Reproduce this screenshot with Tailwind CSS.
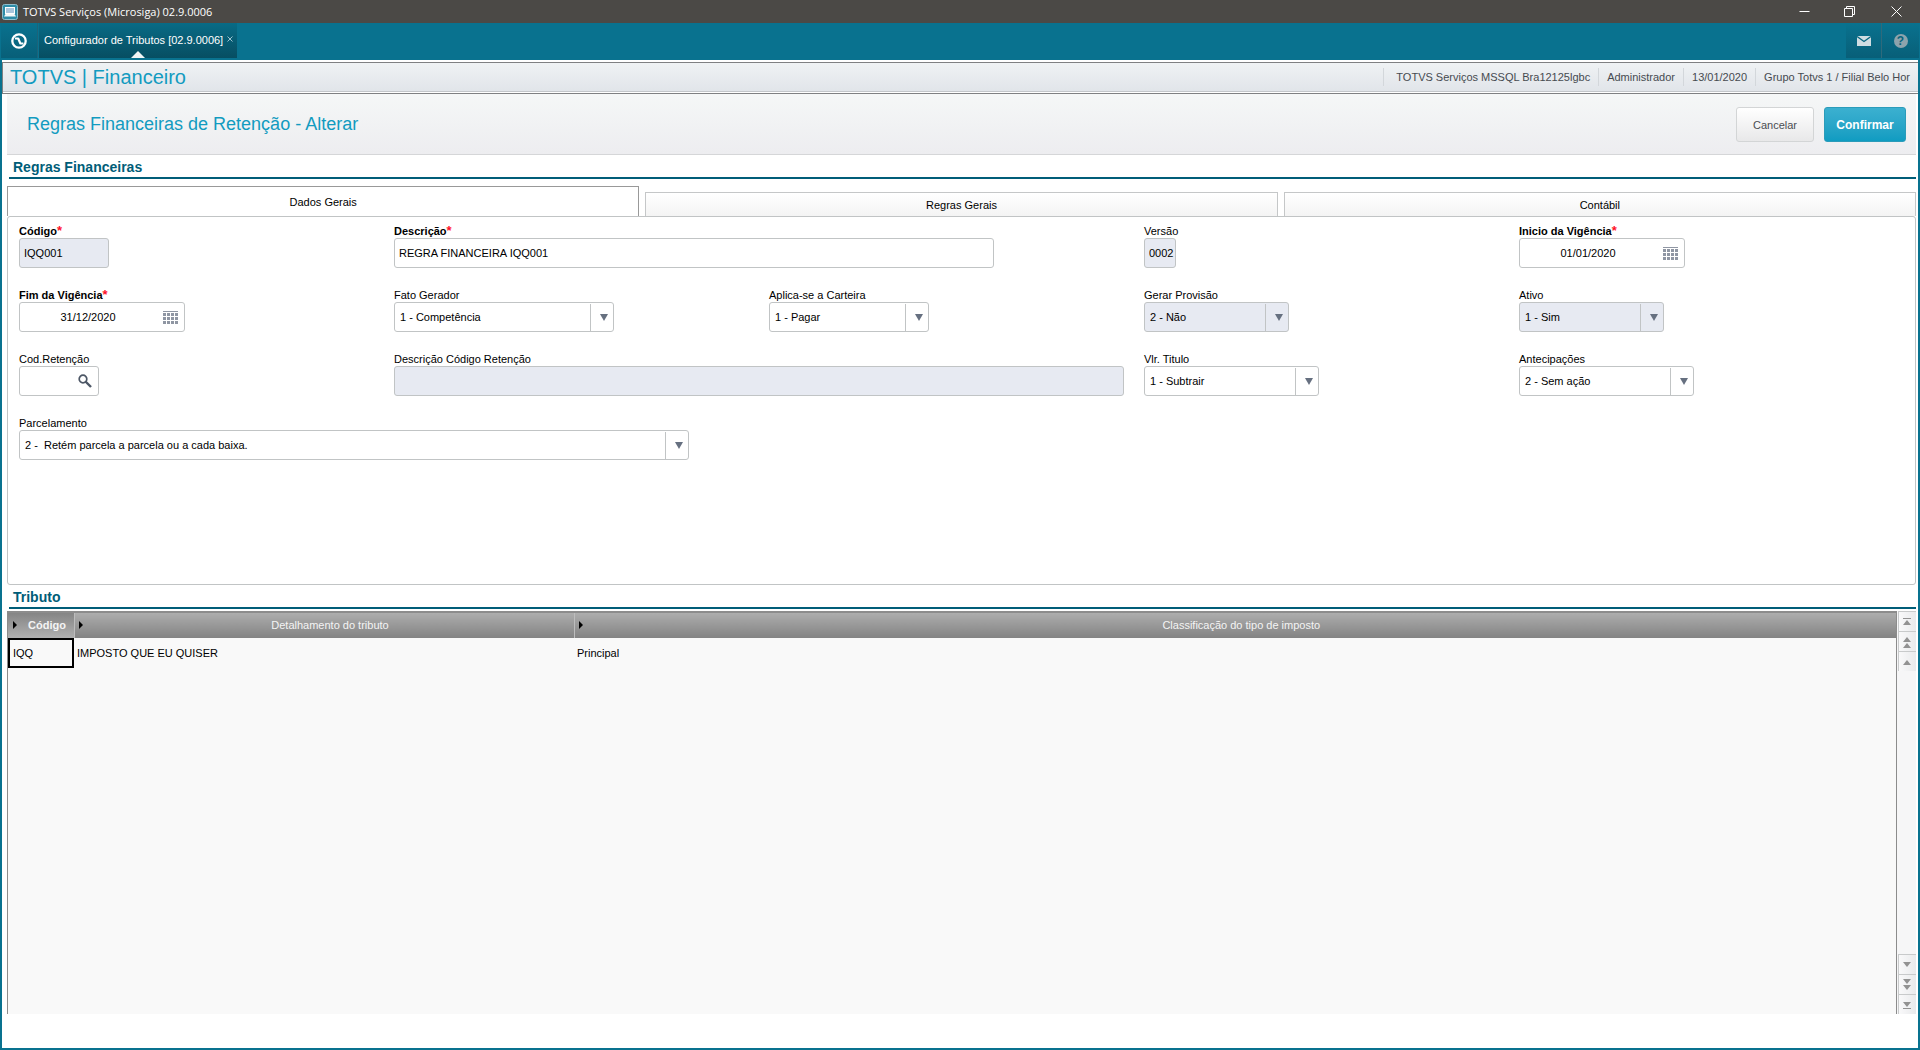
<!DOCTYPE html>
<html lang="pt-BR">
<head>
    <meta charset="UTF-8">
    <meta name="viewport" content="width=device-width, initial-scale=1.0">
    <title>TOTVS Serviços (Microsiga) 02.9.0006</title>
    <script src="https://cdn.jsdelivr.net/npm/@tailwindcss/browser@4"></script>
</head>
<body class="min-h-screen flex flex-col bg-[#09728f] font-['Liberation_Sans',Arial,sans-serif] text-[11px] leading-4 text-black">

    <!-- Window title bar -->
    <header class="h-[23px] shrink-0 flex items-center bg-[#4b4946] text-white">
        <svg class="ml-0.5 w-4 h-4" viewBox="0 0 16 16">
            <rect x="0.5" y="0.5" width="15" height="15" rx="2" fill="#2d8ca8" stroke="#8fbccb"/>
            <rect x="3.5" y="3.5" width="9" height="6" fill="#a9c6dd" stroke="#fff"/>
            <path d="M2 12.5h12l-1.500-2.500h-9z" fill="#f2f8fa"/>
        </svg>
        <h1 class="ml-[5px] font-['Open_Sans','Noto_Sans',sans-serif]">TOTVS Serviços (Microsiga) 02.9.0006</h1>
        <div class="ml-auto flex">
            <button aria-label="Minimizar" class="w-[45px] h-5 flex items-center justify-center">
                <svg class="w-[11px] h-[11px]" viewBox="0 0 11 11"><path d="M0.5 5.5h10" stroke="#fff"/></svg>
            </button>
            <button aria-label="Restaurar" class="w-[45px] h-5 flex items-center justify-center">
                <svg class="w-[11px] h-[11px]" viewBox="0 0 11 11" fill="none" stroke="#fff"><path d="M0.5 2.5h8v8h-8zM2.5 2.5v-2h8v8h-2"/></svg>
            </button>
            <button aria-label="Fechar" class="w-12 h-5 flex items-center justify-center">
                <svg class="w-[11px] h-[11px]" viewBox="0 0 11 11"><path d="M0.5 0.5l10 10M10.5 0.5l-10 10" stroke="#fff"/></svg>
            </button>
        </div>
    </header>

    <!-- Program tabs -->
    <nav class="h-[37px] shrink-0 flex items-start px-px">
        <button aria-label="TOTVS" class="w-[37px] h-[35px] flex items-center justify-center bg-linear-to-b from-[#09728f] to-[#085f78] border-r border-[#1d6379]">
            <svg class="w-4 h-4" viewBox="0 0 16 16" fill="none" stroke="#fff">
                <circle cx="8" cy="8" r="6.7" stroke-width="2.3"/>
                <path d="M4 5.500h3.200l2.200 5h3" stroke-width="2.200" stroke-linejoin="round"/>
            </svg>
        </button>
        <div class="relative ml-px w-[198px] h-[35px] flex items-center gap-1 pl-[5px] pb-px bg-linear-to-b from-[#086b86] to-[#074e62] text-white">
            <a href="#">Configurador de Tributos [02.9.0006]</a>
            <button aria-label="Fechar aba" class="pb-0.5">
                <svg class="w-[6px] h-[6px]" viewBox="0 0 6 6"><path d="M0.5 0.5l5 5M5.5 0.5l-5 5" stroke="#9cc3cf"/></svg>
            </button>
            <svg class="absolute bottom-0 left-1/2 -translate-x-1/2 w-[14px] h-[7px]" viewBox="0 0 14 7"><path d="M0 7l7-7 7 7z" fill="#f2f5f6"/></svg>
        </div>
        <div class="ml-auto flex">
            <button aria-label="Mensagens" class="w-9 h-[35px] flex items-center justify-center bg-linear-to-b from-[#09728f] to-[#085f78] border-r border-[#2f6a7c]">
                <svg class="w-[14px] h-[10px]" viewBox="0 0 14 10"><rect width="14" height="10" fill="#cfdde2"/><path d="M0 0.5l7 5 7-5" fill="none" stroke="#086680" stroke-width="1.4"/></svg>
            </button>
            <button aria-label="Ajuda" class="w-[37px] h-[35px] flex items-center justify-center bg-linear-to-b from-[#09728f] to-[#085f78]">
                <span class="w-[14px] h-[14px] rounded-full bg-[#8da3ac] text-[#08647d] text-xs leading-[14px] font-bold">?</span>
            </button>
        </div>
    </nav>

    <main class="grow flex flex-col mx-0.5 mb-0.5 bg-white">
        <div class="mt-0.5 h-8 flex items-center pb-0.5 border border-r-0 border-[#7f8082] bg-linear-to-b from-[#eff2f4] to-[#e0e4e9] shadow-[inset_0_-1px_0_#fff,inset_0_-2px_0_#c3c6ca]">
            <h2 class="pl-[7px] text-[20px] leading-6 text-[#129bc0]">TOTVS | Financeiro</h2>
            <ul class="ml-auto flex text-[#464a50] leading-[18px]">
                <li class="pl-3 pr-2 border-l border-[#d3d7db]">TOTVS Serviços MSSQL Bra12125lgbc</li>
                <li class="px-2 border-l border-[#d3d7db]">Administrador</li>
                <li class="px-2 border-l border-[#d3d7db]">13/01/2020</li>
                <li class="px-2 border-l border-[#d3d7db]">Grupo Totvs 1 / Filial Belo Hor</li>
            </ul>
        </div>

        <div class="ml-[5px] mr-0.5 h-[61px] flex items-center bg-linear-to-b from-[#f5f7f7] to-[#ededf0] border-b border-[#d5d6d8]">
            <h2 class="pl-5 text-[18px] leading-6 text-[#129bc0]">Regras Financeiras de Retenção - Alterar</h2>
            <div class="ml-auto mr-[10px] flex gap-[10px]">
                <button class="w-[78px] h-[35px] pt-0.5 rounded-[3px] border border-[#d3d5d6] bg-linear-to-b from-white to-[#e8e8e9] text-[#4a4d52]">Cancelar</button>
                <button class="w-[82px] h-[35px] pt-0.5 rounded-[3px] border border-[#2b9cba] bg-linear-to-b from-[#3bb0d0] to-[#0f9cc1] text-white text-xs font-bold">Confirmar</button>
            </div>
        </div>

        <h3 class="ml-[7px] mr-0.5 h-6 pl-1 pt-0.5 text-[14px] leading-5 font-bold text-[#005d78] border-b-2 border-[#005d78]">Regras Financeiras</h3>

        <!-- Folder tabs -->
        <div class="ml-[5px] mr-0.5 mt-[7px] h-[30px] flex items-end gap-[6px]">
            <button class="flex-1 h-[30px] border border-b-0 border-[#999]">Dados Gerais</button>
            <button class="flex-1 h-6 border border-b-0 border-[#c5c7c8] bg-linear-to-b from-white to-[#f4f4f4]">Regras Gerais</button>
            <button class="flex-1 h-6 border border-b-0 border-[#c5c7c8] bg-linear-to-b from-white to-[#f4f4f4]">Contábil</button>
        </div>
        <form id="fields" class="ml-[5px] mr-0.5 h-[369px] pl-[11px] pr-[21px] pt-1.5 grid grid-cols-5 auto-rows-[64px] content-start border border-[#c1c4c5] rounded-[3px]"></form>

        <h3 class="ml-[7px] mr-0.5 h-6 pl-1 pt-0.5 text-[14px] leading-5 font-bold text-[#005d78] border-b-2 border-[#005d78]">Tributo</h3>

        <div class="grow ml-[5px] mr-0.5 mt-0.5 mb-[34px] flex">
            <div class="grow border-t-2 border-x border-[#8c8c8c] bg-[#f9f9f9]">
                <table class="w-full table-fixed border-collapse">
                    <thead>
                        <tr class="h-[25px] text-[#f4f4f4]">
                            <th class="w-[66px] p-0 pb-0.5 bg-linear-to-b from-[#858585] to-[#b0b0b0]">
                                <span class="flex items-center pl-[5px]"><svg class="w-1 h-2 mr-[11px]" viewBox="0 0 4 8"><path d="M0 0l4 4-4 4z"/></svg>Código</span>
                            </th>
                            <th class="w-[500px] p-0 pb-0.5 font-normal border-l border-[#bdbdbd] bg-linear-to-b from-[#adadad] to-[#838383]">
                                <span class="flex items-center pl-1"><svg class="w-1 h-2" viewBox="0 0 4 8"><path d="M0 0l4 4-4 4z"/></svg><span class="grow pl-1 text-center">Detalhamento do tributo</span></span>
                            </th>
                            <th class="p-0 pb-0.5 font-normal border-l border-[#bdbdbd] bg-linear-to-b from-[#adadad] to-[#838383]">
                                <span class="flex items-center pl-1"><svg class="w-1 h-2" viewBox="0 0 4 8"><path d="M0 0l4 4-4 4z"/></svg><span class="grow pl-1 text-center">Classificação do tipo de imposto</span></span>
                            </th>
                        </tr>
                    </thead>
                    <tbody>
                        <tr class="h-[30px]">
                            <td class="p-0"><div class="h-[30px] pl-[3px] leading-[26px] border-2 border-black">IQQ</div></td>
                            <td class="py-0 px-[3px]">IMPOSTO QUE EU QUISER</td>
                            <td class="py-0 px-[3px]">Principal</td>
                        </tr>
                    </tbody>
                </table>
            </div>
            <div class="w-[19px] pl-px shrink-0 flex flex-col justify-between bg-[#f6f6f7]">
                <div id="scrollUp"></div>
                <div id="scrollDown"></div>
            </div>
        </div>
    </main>

<script>
  const fields = [
    { id: 'codigo', label: 'Código', value: 'IQQ001', width: 90, required: true, locked: true },
    { id: 'descricao', label: 'Descrição', value: 'REGRA FINANCEIRA IQQ001', width: 600, required: true, span: 'col-span-2' },
    { id: 'versao', label: 'Versão', value: '0002', width: 32, locked: true },
    { id: 'inicio', label: 'Inicio da Vigência', value: '01/01/2020', width: 166, required: true, type: 'date' },
    { id: 'fim', label: 'Fim da Vigência', value: '31/12/2020', width: 166, required: true, type: 'date' },
    { id: 'fato', label: 'Fato Gerador', value: '1 - Competência', width: 220, type: 'select' },
    { id: 'carteira', label: 'Aplica-se a Carteira', value: '1 - Pagar', width: 160, type: 'select' },
    { id: 'provisao', label: 'Gerar Provisão', value: '2 - Não', width: 145, type: 'select', locked: true },
    { id: 'ativo', label: 'Ativo', value: '1 - Sim', width: 145, type: 'select', locked: true },
    { id: 'retencao', label: 'Cod.Retenção', value: '', width: 80, type: 'search' },
    { id: 'descRetencao', label: 'Descrição Código Retenção', value: '', width: 730, locked: true, span: 'col-span-2' },
    { id: 'titulo', label: 'Vlr. Titulo', value: '1 - Subtrair', width: 175, type: 'select' },
    { id: 'antecipacoes', label: 'Antecipações', value: '2 - Sem ação', width: 175, type: 'select' },
    { id: 'parcelamento', label: 'Parcelamento', value: '2 -\u00a0 Retém parcela a parcela ou a cada baixa.', width: 670, type: 'select', span: 'col-span-2' },
  ];

  const calendarIcon = `<svg class="w-[15px] h-[13px]" viewBox="0 0 15 13" fill="#8f96a3"><path d="M0 0h15v1H0zM0 2h3v3H0zM4 2h3v3H4zM8 2h3v3H8zM12 2h3v3h-3zM0 6h3v3H0zM4 6h3v3H4zM8 6h3v3H8zM12 6h3v3h-3zM0 10h3v3H0zM4 10h3v3H4zM8 10h3v3H8zM12 10h3v3h-3z"/></svg>`;
  const searchIcon = `<svg class="w-[14px] h-[14px]" viewBox="0 0 14 14" fill="none" stroke="#4d5766"><circle cx="5" cy="5" r="3.8" stroke-width="1.7"/><path d="M7.500 7.500l5.500 5.500" stroke-width="2.4"/></svg>`;
  const arrowIcon = `<svg class="w-2 h-[7px]" viewBox="0 0 8 7"><path d="M0 0h8L4 7z" fill="#667080"/></svg>`;

  function control(f) {
    if (f.type === 'select') {
      return `
        <select id="${f.id}" class="appearance-none w-full h-full pl-[5px] pr-6 outline-none" ${f.locked ? 'disabled' : ''}><option>${f.value}</option></select>
        <span class="absolute right-0 top-px bottom-0 w-[23px] pl-[3px] flex items-center justify-center border-l border-[#c1c4c5] pointer-events-none">${arrowIcon}</span>`;
    }
    if (f.type === 'date') {
      return `
        <input id="${f.id}" value="${f.value}" class="grow min-w-0 h-full text-center outline-none">
        <button type="button" aria-label="Calendário" class="w-7 shrink-0 pr-[6px] pt-px flex justify-end">${calendarIcon}</button>`;
    }
    if (f.type === 'search') {
      return `
        <input id="${f.id}" value="${f.value}" class="grow min-w-0 h-full pl-1 outline-none">
        <button type="button" aria-label="Pesquisar" class="w-6 shrink-0 pr-[6px] flex justify-end">${searchIcon}</button>`;
    }
    return `<input id="${f.id}" value="${f.value}" class="w-full h-full pl-1 outline-none" ${f.locked ? 'readonly' : ''}>`;
  }

  document.getElementById('fields').innerHTML = fields.map(f => `
    <div class="${f.span || ''}">
      <label for="${f.id}" class="block h-[15px] leading-[17px] ${f.required ? 'font-bold' : ''}">${f.label}${f.required ? '<span class="text-[13px] leading-none text-[#ff1028]">*</span>' : ''}</label>
      <div style="width:${f.width}px" class="relative max-w-full h-[30px] flex items-center overflow-hidden border border-[#c1c4c5] rounded-[3px] ${f.locked ? 'bg-[#e7eaf2]' : 'bg-white'}">${control(f)}</div>
    </div>`).join('');

  // grid scroll buttons
  function scrollButton(label, paths) {
    return `<button aria-label="${label}" class="w-full h-5 pr-0.5 flex items-center justify-center border-t border-l border-[#c8cacb] bg-linear-to-r from-[#f9f9fa] to-[#e9eaec]">
      <svg class="w-[14px] h-[14px]" viewBox="0 0 14 14" fill="#929292">${paths}</svg></button>`;
  }
  document.getElementById('scrollUp').innerHTML =
    scrollButton('Início', `<path d="M3 3h8v1H3zM3 10l4-5 4 5z"/>`) +
    scrollButton('Página acima', `<path d="M3 7l4-5 4 5zM3 13l4-5 4 5z"/>`) +
    scrollButton('Acima', `<path d="M3 10l4-5 4 5z"/>`);
  document.getElementById('scrollDown').innerHTML =
    scrollButton('Abaixo', `<path d="M3 4h8l-4 5z"/>`) +
    scrollButton('Página abaixo', `<path d="M3 1h8l-4 5zM3 7h8l-4 5z"/>`) +
    scrollButton('Fim', `<path d="M3 4h8l-4 5zM3 10h8v1H3z"/>`);
</script>
</body>
</html>
